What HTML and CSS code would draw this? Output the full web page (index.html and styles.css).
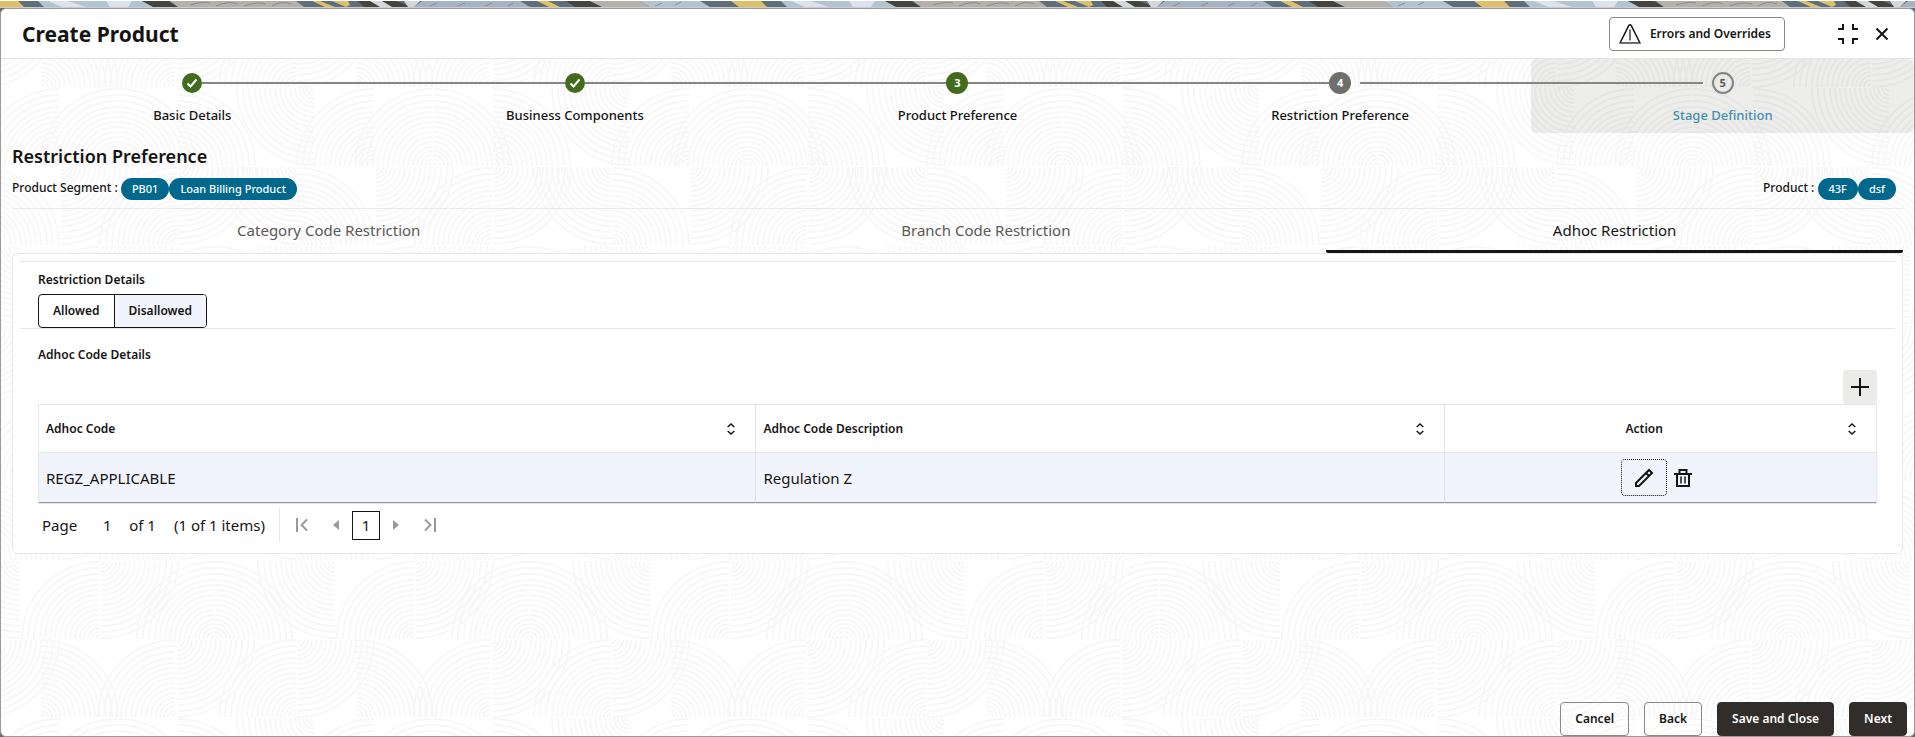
FILE: index.html
```html
<!DOCTYPE html>
<html lang="en">
<head>
    <meta charset="utf-8">
    <title>Create Product</title>
    <link rel="stylesheet" href="styles.css">
</head>
<body>
    <div class="banner"></div>
    <main class="modal">
        <header class="modal-header">
            <h1>Create Product</h1>
            <button type="button" class="btn errors">
                <svg width="24" height="22" viewBox="0 0 24 22" fill="none" stroke="#161513"><path d="M2 20 10.600 2.800Q12 .600 13.400 2.800L22 20Z" stroke-width="1.500" stroke-linejoin="round"/><path d="M2 20.300H22" stroke="#777" stroke-width="1.500"/><path d="M12 6.500V17.500" stroke-width="1.200"/></svg>
                Errors and Overrides
            </button>
            <button type="button" class="icon-btn collapse" aria-label="Collapse">
                <svg width="22" height="22" viewBox="0 0 22 22" fill="none" stroke="#161513" stroke-width="2"><path d="M1 6H6V1M16 1V6H21M1 16H6V21M16 21V16H21"/></svg>
            </button>
            <button type="button" class="icon-btn close" aria-label="Close">
                <svg width="14" height="14" viewBox="0 0 14 14" fill="none" stroke="#161513" stroke-width="2"><path d="M1.500 1.500 12.500 12.500M12.500 1.500 1.500 12.500"/></svg>
            </button>
        </header>

        <div class="modal-body">
            <ol class="train">
                <li class="step done">
                    <span class="track"><span class="dot"><svg width="12" height="10" viewBox="0 0 12 10" fill="none" stroke="#fff" stroke-width="2"><path d="M1.500 5.500 4.500 8.500 10.500 1.500"/></svg></span></span>
                    <a href="#basic">Basic Details</a>
                </li>
                <li class="step done">
                    <span class="track"><span class="dot"><svg width="12" height="10" viewBox="0 0 12 10" fill="none" stroke="#fff" stroke-width="2"><path d="M1.500 5.500 4.500 8.500 10.500 1.500"/></svg></span></span>
                    <a href="#components">Business Components</a>
                </li>
                <li class="step visited">
                    <span class="track"><span class="dot">3</span></span>
                    <a href="#product">Product Preference</a>
                </li>
                <li class="step current">
                    <span class="track"><span class="dot">4</span></span>
                    <a href="#restriction">Restriction Preference</a>
                </li>
                <li class="step next">
                    <span class="track"><span class="dot">5</span></span>
                    <a href="#stage">Stage Definition</a>
                </li>
            </ol>

            <div class="content">
                <h2>Restriction Preference</h2>
                <div class="info">
                    <div class="info-item">Product Segment : <span class="badge">PB01</span><span class="badge">Loan Billing Product</span></div>
                    <div class="info-item">Product : <span class="badge">43F</span><span class="badge">dsf</span></div>
                </div>

                <div class="tabs" role="tablist">
                    <button type="button" class="tab" role="tab">Category Code Restriction</button>
                    <button type="button" class="tab" role="tab">Branch Code Restriction</button>
                    <button type="button" class="tab active" role="tab" aria-selected="true">Adhoc Restriction</button>
                </div>

                <section class="panel">
                    <div class="details">
                        <h3 id="restrictionLabel">Restriction Details</h3>
                        <div class="buttonset" role="group" aria-labelledby="restrictionLabel">
                            <button type="button">Allowed</button>
                            <button type="button" class="selected" aria-pressed="true">Disallowed</button>
                        </div>
                    </div>

                    <div class="codes">
                        <h3>Adhoc Code Details</h3>
                        <div class="toolbar">
                            <button type="button" class="add" aria-label="Add">
                                <svg width="20" height="20" viewBox="0 0 20 20" stroke="#161513" stroke-width="2"><path d="M10 1V19M1 10H19"/></svg>
                            </button>
                        </div>

                        <table class="grid">
                            <colgroup>
                                <col class="col-code">
                                <col class="col-desc">
                                <col class="col-action">
                            </colgroup>
                            <thead>
                                <tr>
                                    <th><div class="th"><span>Adhoc Code</span><svg width="8" height="12" viewBox="0 0 8 12" fill="none" stroke="#161513" stroke-width="1.500"><path d="M.700 4 4 1 7.300 4M.700 8 4 11 7.300 8"/></svg></div></th>
                                    <th><div class="th"><span>Adhoc Code Description</span><svg width="8" height="12" viewBox="0 0 8 12" fill="none" stroke="#161513" stroke-width="1.500"><path d="M.700 4 4 1 7.300 4M.700 8 4 11 7.300 8"/></svg></div></th>
                                    <th><div class="th centered"><span>Action</span><svg width="8" height="12" viewBox="0 0 8 12" fill="none" stroke="#161513" stroke-width="1.500"><path d="M.700 4 4 1 7.300 4M.700 8 4 11 7.300 8"/></svg></div></th>
                                </tr>
                            </thead>
                            <tbody>
                                <tr>
                                    <td>REGZ_APPLICABLE</td>
                                    <td>Regulation Z</td>
                                    <td>
                                        <div class="actions">
                                            <button type="button" class="edit" aria-label="Edit">
                                                <svg width="20" height="20" viewBox="0 0 20 20" fill="none" stroke="#161513" stroke-width="2"><path d="M2 18V15L15 2 18 5 5 18ZM12 5 15 8"/></svg>
                                            </button>
                                            <button type="button" class="delete" aria-label="Delete">
                                                <svg width="18" height="20" viewBox="0 0 18 20" fill="none" stroke="#161513" stroke-width="2"><path d="M0 6H18M5.500 6V2H12.500V6M3 6V18H15V6"/><path d="M7 8.500V15.500M11 8.500V15.500" stroke-width="1.500"/></svg>
                                            </button>
                                        </div>
                                    </td>
                                </tr>
                            </tbody>
                        </table>

                        <div class="pager">
                            <div class="pager-text">
                                <label for="pageNo">Page</label>
                                <input type="text" id="pageNo" value="1">
                                <span class="total">of 1</span>
                                <span>(1 of 1 items)</span>
                            </div>
                            <div class="pager-nav">
                                <button type="button" aria-label="First page"><svg width="12" height="14" viewBox="0 0 12 14" fill="none" stroke="#999" stroke-width="2"><path d="M1 0V14M11 1.500 5.500 7 11 12.500"/></svg></button>
                                <button type="button" aria-label="Previous page"><svg width="6" height="10" viewBox="0 0 6 10" fill="#999"><path d="M6 0V10L0 5Z"/></svg></button>
                                <button type="button" class="page">1</button>
                                <button type="button" aria-label="Next page"><svg width="6" height="10" viewBox="0 0 6 10" fill="#999"><path d="M0 0V10L6 5Z"/></svg></button>
                                <button type="button" aria-label="Last page"><svg width="12" height="14" viewBox="0 0 12 14" fill="none" stroke="#999" stroke-width="2"><path d="M11 0V14M1 1.500 6.500 7 1 12.500"/></svg></button>
                            </div>
                        </div>
                    </div>
                </section>
            </div>

            <footer class="footer">
                <button type="button" class="btn">Cancel</button>
                <button type="button" class="btn">Back</button>
                <button type="button" class="btn primary">Save and Close</button>
                <button type="button" class="btn primary">Next</button>
            </footer>
        </div>
    </main>
</body>
</html>
```
FILE: styles.css
```css
* {
    box-sizing: border-box;
}

body {
    margin: 0;
    min-height: 100vh;
    display: flex;
    flex-direction: column;
    background: #5f6e79;
    color: #161513;
    font-family: "Noto Sans", "Open Sans", sans-serif;
    font-size: 12px;
    line-height: 20px;
}

h1, h2, h3 {
    margin: 0;
}

button {
    font: inherit;
    color: inherit;
    background: none;
    border: none;
    padding: 0;
    cursor: pointer;
}

svg {
    display: block;
    flex: none;
}

/* coloured strip above the dialog */
.banner {
    height: 8px;
    border-top: 1px solid #fff;
    border-bottom: 1px solid #c8cccf;
    background: #5f6e79 url("data:image/svg+xml,%3Csvg xmlns='http://www.w3.org/2000/svg' width='743' height='6'%3E%3Cg fill='%23dfc069'%3E%3Cpath d='M-12 0H18L24 6H-4ZM312 0H320L335 6H325ZM332 0H348L350 4 346 6ZM537 0H548L560 6H549ZM731 0H761L767 6H739Z'/%3E%3C/g%3E%3Cpath fill='%23b3c3d0' d='M38 0H145L155 6H44ZM640 0H700L710 6H650Z'/%3E%3Cpath fill='%23dbe3ec' d='M48 0H68L86 6H62ZM106 0H132L128 6H110Z'/%3E%3Cpath fill='%2345443f' d='M142 0H168L178 6H153ZM358 0H396L412 6H364ZM566 0H590L602 6H575Z'/%3E%3Cpath fill='%23d4d8da' d='M370 0H382L392 6H380ZM404 0H420L414 6H408Z'/%3E%3Cpath fill='%23b5b0aa' d='M170 0H296L304 6H178ZM590 0H640L650 6H602Z'/%3E%3Cpath fill='%23a6b3c4' d='M422 0H520L530 6H414Z'/%3E%3Cpath fill='none' stroke='%238e8b87' d='M190 4Q204 0 210 2M216 5Q230 -1 237 3M244 5Q258 0 266 3M272 5Q282 -1 291 3M430 5L437 2M458 5L465 2M485 5L492 2M508 5L514 2M655 5L662 2M675 4L681 1'/%3E%3C/svg%3E") 0 0 repeat-x;
}

.modal {
    flex: 1;
    display: flex;
    flex-direction: column;
    border: 1px solid #9a9a9a;
    border-radius: 6px;
    background: #fff;
    overflow: hidden;
}

.modal-header {
    display: flex;
    align-items: center;
    height: 50px;
    padding: 0 25px 0 21px;
    border-bottom: 1px solid #e6e6e6;
}

.modal-header h1 {
    flex: 1;
    font-size: 21px;
    line-height: 28px;
}

.btn {
    height: 34px;
    padding: 0 14px;
    border: 1px solid #8b8986;
    border-radius: 4px;
    font-weight: 600;
}

.errors {
    display: flex;
    align-items: center;
    gap: 8px;
    padding: 0 13px 0 8px;
}

.collapse {
    margin-left: 52px;
}

.close {
    margin-left: 16px;
}

/* arcs behind the content */
.modal-body {
    flex: 1;
    display: flex;
    flex-direction: column;
    background: url("data:image/svg+xml,%3Csvg xmlns='http://www.w3.org/2000/svg' width='315' height='315'%3E%3Cdefs%3E%3Cpath id='f' fill='none' stroke='%23f7f7f7' stroke-width='2' d='M-77 0A77 77 0 0 1 0-77M-71 0A71 71 0 0 1 0-71M-65 0A65 65 0 0 1 0-65M-59 0A59 59 0 0 1 0-59M-54 0A54 54 0 0 1 0-54M-49 0A49 49 0 0 1 0-49M-44 0A44 44 0 0 1 0-44M-39 0A39 39 0 0 1 0-39M-34 0A34 34 0 0 1 0-34M-29 0A29 29 0 0 1 0-29M-24 0A24 24 0 0 1 0-24M-19 0A19 19 0 0 1 0-19M-15 0A15 15 0 0 1 0-15M-11 0A11 11 0 0 1 0-11M-7 0A7 7 0 0 1 0-7M-3 0A3 3 0 0 1 0-3'/%3E%3Cg id='a'%3E%3Cuse href='%23f' x='58' y='78'/%3E%3Cuse href='%23f' x='116' y='78'/%3E%3Cuse href='%23f' transform='translate(117 78) scale(-1 1)'/%3E%3Cuse href='%23f' transform='translate(177 78) scale(-1 1)'/%3E%3Cuse href='%23f' transform='translate(313 0) scale(1 -1)'/%3E%3Cuse href='%23f' transform='translate(60 79) scale(-1)'/%3E%3Cuse href='%23f' x='176' y='157'/%3E%3Cuse href='%23f' transform='translate(178 79) scale(-1)'/%3E%3Cuse href='%23f' transform='translate(295 79) scale(1 -1)'/%3E%3Cuse href='%23f' transform='translate(296 157) scale(-1 1)'/%3E%3Cuse href='%23f' x='98' y='236'/%3E%3Cuse href='%23f' transform='translate(100 158) scale(-1)'/%3E%3Cuse href='%23f' x='213' y='236'/%3E%3Cuse href='%23f' transform='translate(214 236) scale(-1 1)'/%3E%3Cuse href='%23f' transform='translate(334 158) scale(1 -1)'/%3E%3Cuse href='%23f' transform='translate(40 314) scale(-1 1)'/%3E%3Cuse href='%23f' x='174' y='314'/%3E%3Cuse href='%23f' transform='translate(176 237) scale(-1)'/%3E%3Cuse href='%23f' x='295' y='314'/%3E%3Cuse href='%23f' transform='translate(296 237) scale(-1)'/%3E%3C/g%3E%3C/defs%3E%3Cuse href='%23a'/%3E%3Cuse href='%23a' x='-315'/%3E%3Cuse href='%23a' x='315'/%3E%3C/svg%3E") 0 29px;
}

.train {
    display: flex;
    margin: 0;
    padding: 0;
    list-style: none;
}

.step {
    flex: 1;
    display: flex;
    flex-direction: column;
    height: 74px;
    padding-top: 13px;
    gap: 11px;
    text-align: center;
}

.step a {
    color: inherit;
    font-size: 13px;
    font-weight: 500;
    text-decoration: none;
}

.track {
    display: grid;
    grid-template-columns: 1fr auto 1fr;
    align-items: center;
    height: 22px;
}

.track::before,
.track::after {
    content: "";
    height: 2px;
    background: #858585;
}

.step:first-child .track::before,
.step:last-child .track::after {
    visibility: hidden;
}

.dot {
    display: flex;
    align-items: center;
    justify-content: center;
    width: 22px;
    height: 22px;
    border-radius: 50%;
    background: #436b1d;
    color: #fff;
    font-size: 11px;
    font-weight: 700;
}

.done .dot {
    width: 20px;
    height: 20px;
}

.current .dot {
    background: #6f6e6a;
}

.current .track::after {
    margin-left: 9px;
}

.next {
    background: rgba(22, 21, 19, 0.08);
    border-radius: 6px;
}

.next .track::before {
    margin-right: 9px;
}

.next .dot {
    background: none;
    border: 2px solid #858481;
    color: #5b5956;
}

.next a {
    color: #4590ab;
}

.content {
    flex: 1;
    padding: 10px 11px;
}

.content h2 {
    font-size: 18px;
    font-weight: 600;
    line-height: 26px;
}

.info {
    display: flex;
    justify-content: space-between;
    height: 40px;
    padding: 9px 7px 0 0;
    border-bottom: 1px solid #e9e9e9;
    font-weight: 500;
}

.info-item {
    display: flex;
    white-space: pre;
}

.badge {
    height: 22px;
    padding: 0 11px;
    border-radius: 11px;
    background: #00688c;
    color: #fff;
    font-size: 11px;
    line-height: 22px;
}

.tabs {
    display: grid;
    grid-template-columns: 67fr 72fr 61fr;
}

.tab {
    height: 44px;
    border-bottom: 3px solid transparent;
    color: #5b5956;
    font-size: 15px;
}

.tab.active {
    border-color: #161513;
    border-radius: 2px;
    color: #161513;
}

.panel {
    padding: 7px;
    border: 1px solid #e8e8e8;
    border-radius: 6px;
    background: #fff;
}

.panel h3 {
    font-size: 12px;
    font-weight: 600;
    line-height: 20px;
}

.details {
    padding: 8px 18px 0;
    border-top: 1px solid #e6e6e6;
    border-bottom: 1px solid #e6e6e6;
}

.buttonset {
    display: inline-flex;
    vertical-align: top;
    margin-top: 4px;
    height: 34px;
    border: 1px solid #161513;
    border-radius: 4px;
    overflow: hidden;
}

.buttonset button {
    padding: 0 14px;
    font-weight: 600;
}

.buttonset .selected {
    border-left: 1px solid #161513;
    background: #f1f4fd;
}

.codes {
    padding: 16px 18px 4px;
}

.toolbar {
    display: flex;
    justify-content: flex-end;
    margin-top: 5px;
}

.add {
    display: flex;
    align-items: center;
    justify-content: center;
    width: 34px;
    height: 34px;
    border-radius: 4px;
    background: #ebebea;
}

.grid {
    width: 100%;
    border-collapse: separate;
    border-spacing: 0;
    table-layout: fixed;
    border: 1px solid #e6e6e6;
}

.col-code {
    width: 39%;
}

.col-desc {
    width: 37.5%;
}

.grid th,
.grid td {
    padding: 0 8px 0 7px;
    text-align: left;
}

.grid th {
    height: 48px;
    border-bottom: 1px solid #e6e6e6;
    font-weight: 600;
}

.grid td {
    height: 50px;
    border-bottom: 1px solid #8e94a8;
    background: #f1f4fd;
    font-size: 15px;
}

.grid th + th,
.grid td + td {
    border-left: 1px solid #dfe1e6;
}

.th {
    display: flex;
    align-items: center;
    justify-content: space-between;
    gap: 12px;
    padding-right: 12px;
}

.centered span {
    flex: 1;
    text-align: center;
}

.actions {
    display: flex;
    align-items: center;
    justify-content: center;
    gap: 7px;
    padding-right: 8px;
}

.edit {
    display: flex;
    align-items: center;
    justify-content: center;
    width: 46px;
    height: 37px;
    border: 1px dotted #161513;
    border-radius: 4px;
}

.pager {
    display: flex;
    align-items: center;
    margin-top: 4px;
    font-size: 15px;
}

.pager-text {
    display: flex;
    align-items: center;
    height: 34px;
    padding: 0 14px 0 4px;
    border-right: 1px solid #e6e6e6;
}

.pager-text input {
    width: 52px;
    padding: 0 0 0 8px;
    border: none;
    background: none;
    color: inherit;
    font: inherit;
    text-align: center;
}

.total {
    margin-right: 18px;
}

.pager-nav {
    display: flex;
    align-items: center;
    gap: 13px;
    padding-left: 16px;
}

.pager-nav button:first-child {
    margin-right: 12px;
}

.pager-nav button:last-child {
    margin-left: 12px;
}

.page {
    width: 28px;
    height: 29px;
    border: 1px solid #161513;
}

.footer {
    display: flex;
    justify-content: flex-end;
    gap: 15px;
    padding-right: 7px;
}

.btn.primary {
    border-color: #312d2a;
    background: #312d2a;
    color: #fff;
}
```
